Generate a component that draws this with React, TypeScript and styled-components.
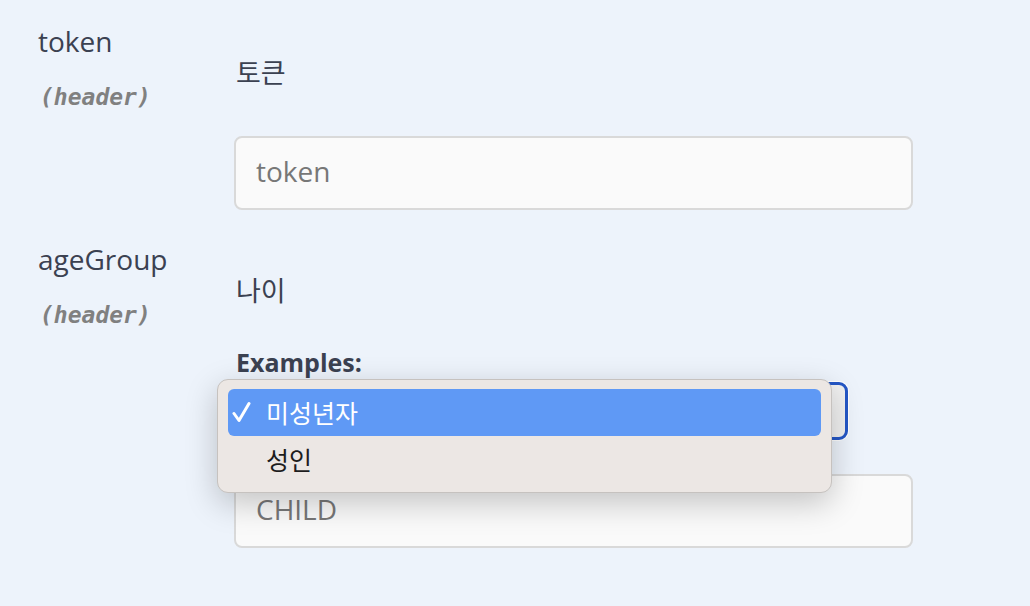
import React from 'react';
import styled, { createGlobalStyle } from 'styled-components';

const GlobalStyle = createGlobalStyle`
	html, body {
		margin: 0;
		padding: 0;
		background: #edf3fb;
	}
	body {
		font-family: "Open Sans", "Noto Sans CJK KR", sans-serif;
		color: #3b4151;
	}
`;

const Page = styled.div`
	width: 1030px;
	height: 606px;
	overflow: hidden;
	background: #edf3fb;
	padding-left: 38px;
	box-sizing: border-box;
`;

const Row = styled.div`
	display: grid;
	grid-template-columns: 196px 679px;
	padding: 22px 0 8px;
`;

const NameCol = styled.div`
	display: flex;
	flex-direction: column;
`;

const ParamName = styled.div`
	font-size: 28px;
	line-height: 38px;
	color: #3b4151;
`;

const ParamIn = styled.div`
	margin-top: 24px;
	font-family: "DejaVu Sans Mono", monospace;
	font-size: 23px;
	font-weight: 700;
	font-style: italic;
	color: #808080;
	margin-left: 2px;
`;

const DescCol = styled.div`
	display: flex;
	flex-direction: column;
	position: relative;
`;

const Description = styled.p`
	margin: 32px 0 0 2px;
	font-size: 27px;
	line-height: 38px;
`;

const ExamplesLabel = styled.div`
	margin: 34px 0 0 2px;
	font-size: 25px;
	font-weight: 700;
	line-height: 36px;
`;

const Input = styled.input`
	box-sizing: border-box;
	width: 679px;
	height: 74px;
	margin-top: ${(p) => p.$gap}px;
	padding: 0 20px 5px;
	border: 2px solid #d9d9d9;
	border-radius: 8px;
	background: #fafafa;
	font-family: "Open Sans", sans-serif;
	font-size: 28px;
	color: #3b4151;
	outline: none;
	&::placeholder {
		color: #777;
	}
`;

const SelectWrap = styled.div`
	position: relative;
	margin-top: 2px;
	width: 614px;
`;

const SelectBox = styled.div`
	box-sizing: border-box;
	height: 58px;
	border: 3px solid #2457c6;
	border-radius: 9px;
	background: #f1f1f1;
	box-shadow: 0 0 0 1px #ffffff;
`;

const Menu = styled.div`
	position: absolute;
	left: -17px;
	top: -3px;
	z-index: 10;
	box-sizing: border-box;
	width: 615px;
	padding: 9px 10px 9px 10px;
	background: #ece7e4;
	border: 1px solid #c6c2bf;
	border-radius: 11px;
	box-shadow: 0 10px 32px rgba(0, 0, 0, 0.22);
`;

const MenuItem = styled.div`
	display: flex;
	align-items: center;
	height: 47px;
	border-radius: 6px;
	background: ${(p) => (p.$active ? '#5f99f5' : 'transparent')};
	color: ${(p) => (p.$active ? '#ffffff' : '#1d1d1d')};
	font-family: "Noto Sans CJK KR", sans-serif;
	font-size: 25px;
	padding-bottom: 2px;
	box-sizing: border-box;
`;

const Check = styled.span`
	display: flex;
	align-items: center;
	width: 38px;
	padding-left: 4px;
	box-sizing: border-box;
`;

const CheckIcon = () => (
	<svg width="19" height="22" viewBox="0 0 19 22">
		<path
			d="M2 12.5 L7 19.5 L17 2.5"
			fill="none"
			stroke="#ffffff"
			strokeWidth="3"
			strokeLinecap="round"
			strokeLinejoin="round"
		/>
	</svg>
);

const params = [
	{ name: 'token', desc: '토큰', placeholder: 'token' },
	{ name: 'ageGroup', desc: '나이', placeholder: 'CHILD' },
];

const options = ['미성년자', '성인'];

export default function App() {
	return (
		<>
			<GlobalStyle />
			<Page>
				<Row>
					<NameCol>
						<ParamName>{params[0].name}</ParamName>
						<ParamIn>(header)</ParamIn>
					</NameCol>
					<DescCol>
						<Description>{params[0].desc}</Description>
						<Input $gap={44} placeholder={params[0].placeholder} />
					</DescCol>
				</Row>
				<Row>
					<NameCol>
						<ParamName>{params[1].name}</ParamName>
						<ParamIn>(header)</ParamIn>
					</NameCol>
					<DescCol>
						<Description>{params[1].desc}</Description>
						<ExamplesLabel>Examples:</ExamplesLabel>
						<SelectWrap>
							<SelectBox />
							<Menu>
								{options.map((o, i) => (
									<MenuItem key={o} $active={i === 0}>
										<Check>{i === 0 && <CheckIcon />}</Check>
										{o}
									</MenuItem>
								))}
							</Menu>
						</SelectWrap>
						<Input $gap={34} placeholder={params[1].placeholder} />
					</DescCol>
				</Row>
			</Page>
		</>
	);
}
